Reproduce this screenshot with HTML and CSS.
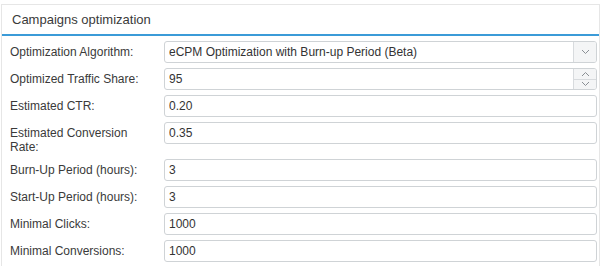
FILE: index.html
```html
<!DOCTYPE html>
<html lang="en">
<head>
    <meta charset="UTF-8">
    <meta name="viewport" content="width=device-width, initial-scale=1.0">
    <title>Campaigns optimization</title>
    <link rel="stylesheet" href="styles.css">
</head>
<body>
    <div class="panel">
        <div class="panel-heading">Campaigns optimization</div>
        <form class="panel-body" id="optimizationForm">
            <label for="algorithm">Optimization Algorithm:</label>
            <div class="control">
                <select id="algorithm" name="algorithm">
                    <option value="ecpm_burnup">eCPM Optimization with Burn-up Period (Beta)</option>
                    <option value="ecpm">eCPM Optimization</option>
                    <option value="none">None</option>
                </select>
                <span class="addon">
                    <svg width="9" height="6" viewBox="0 0 9 6"><path d="M1 1l3.5 3.5L8 1" fill="none" stroke="#8a8f94" stroke-width="1"/></svg>
                </span>
            </div>

            <label for="trafficShare">Optimized Traffic Share:</label>
            <div class="control">
                <input type="text" id="trafficShare" name="trafficShare" value="95">
                <span class="spinner">
                    <button type="button" class="spin">
                        <svg width="9" height="6" viewBox="0 0 9 6"><path d="M1 5l3.5-3.5L8 5" fill="none" stroke="#8a8f94" stroke-width="1"/></svg>
                    </button>
                    <button type="button" class="spin">
                        <svg width="9" height="6" viewBox="0 0 9 6"><path d="M1 1l3.5 3.5L8 1" fill="none" stroke="#8a8f94" stroke-width="1"/></svg>
                    </button>
                </span>
            </div>

            <label for="ctr">Estimated CTR:</label>
            <input class="field" type="text" id="ctr" name="ctr" value="0.20">

            <label for="conversionRate">Estimated Conversion Rate:</label>
            <input class="field" type="text" id="conversionRate" name="conversionRate" value="0.35">

            <label for="burnUp">Burn-Up Period (hours):</label>
            <input class="field" type="text" id="burnUp" name="burnUp" value="3">

            <label for="startUp">Start-Up Period (hours):</label>
            <input class="field" type="text" id="startUp" name="startUp" value="3">

            <label for="minClicks">Minimal Clicks:</label>
            <input class="field" type="text" id="minClicks" name="minClicks" value="1000">

            <label for="minConversions">Minimal Conversions:</label>
            <input class="field" type="text" id="minConversions" name="minConversions" value="1000">
        </form>
    </div>
</body>
</html>
```

FILE: styles.css
```css
body {
    margin: 0;
    padding: 0;
    background-color: #fff;
    font-family: "Liberation Sans", Arial, sans-serif;
    color: #333;
}

.panel {
    margin: 4px 3px 0 1px;
    border: 1px solid #e6e6e6;
    border-bottom: none;
    height: 262px;
    box-sizing: border-box;
}

.panel-heading {
    height: 29px;
    line-height: 29px;
    padding-left: 10px;
    font-size: 13px;
    color: #3a3a3a;
    border-bottom: 2px solid #3b9bd8;
}

.panel-body {
    display: grid;
    grid-template-columns: 154px 1fr;
    row-gap: 5px;
    padding: 5px 2px 0 8px;
    margin: 0;
}

label {
    font-size: 12px;
    line-height: 14px;
    padding-top: 4px;
    color: #3a3a3a;
    padding-right: 20px;
}

.field, .control {
    height: 22px;
    box-sizing: border-box;
    border: 1px solid #cfd3d6;
    border-radius: 3px;
    background: #fff;
}

.field {
    width: 100%;
    padding: 0 4px;
    font-family: "Liberation Sans", Arial, sans-serif;
    font-size: 12px;
    color: #333;
    outline: none;
}

.control {
    display: flex;
    overflow: hidden;
}

.control select, .control input {
    flex: 1;
    min-width: 0;
    border: none;
    outline: none;
    background: transparent;
    -webkit-appearance: none;
    appearance: none;
    padding: 0 4px;
    margin: 0;
    font-family: "Liberation Sans", Arial, sans-serif;
    font-size: 12px;
    color: #333;
}

.addon {
    width: 22px;
    display: flex;
    align-items: center;
    justify-content: center;
    background: #f4f5f6;
    border-left: 1px solid #d8dbde;
}

.spinner {
    width: 22px;
    display: flex;
    flex-direction: column;
    border-left: 1px solid #d8dbde;
}

.spin {
    flex: 1;
    padding: 0;
    margin: 0;
    border: none;
    background: #f4f5f6;
    display: flex;
    align-items: center;
    justify-content: center;
}

.spin + .spin {
    border-top: 1px solid #d8dbde;
}
```
